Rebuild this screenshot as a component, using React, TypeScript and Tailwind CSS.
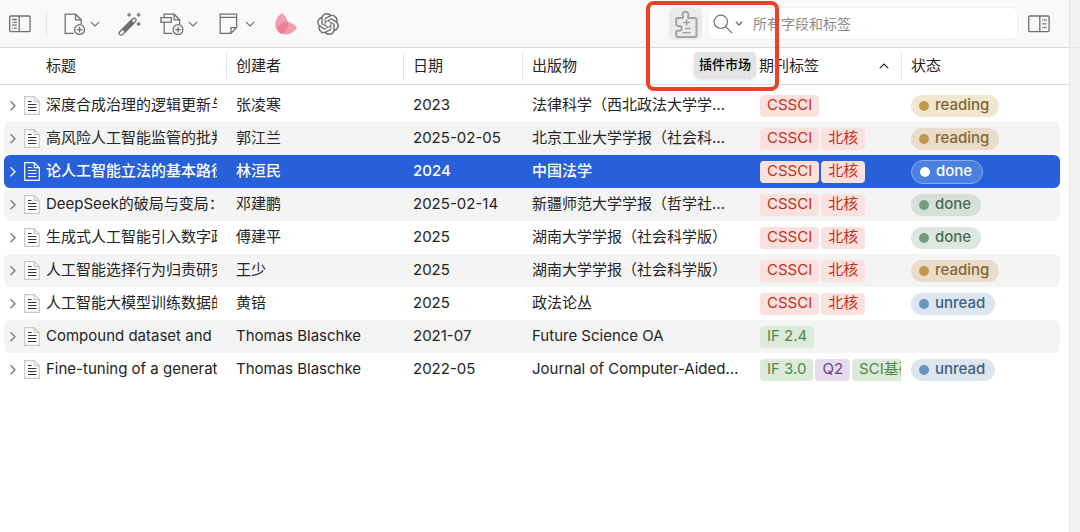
import { useState } from "react";
import clsx from "clsx";
import { SiOpenai } from "react-icons/si";

type Tag = { label: string; color: "red" | "green" | "purple" };
type Status = "reading" | "done" | "unread";

type Item = {
  id: number;
  title: string;
  creator: string;
  date: string;
  publication: string;
  tags: Tag[];
  status?: Status;
};

const cssci: Tag = { label: "CSSCI", color: "red" };
const beihe: Tag = { label: "北核", color: "red" };

const items: Item[] = [
  { id: 1, title: "深度合成治理的逻辑更新与体系迭代", creator: "张凌寒", date: "2023", publication: "法律科学（西北政法大学学报）", tags: [cssci], status: "reading" },
  { id: 2, title: "高风险人工智能监管的批判与反思", creator: "郭江兰", date: "2025-02-05", publication: "北京工业大学学报（社会科学版）", tags: [cssci, beihe], status: "reading" },
  { id: 3, title: "论人工智能立法的基本路径", creator: "林洹民", date: "2024", publication: "中国法学", tags: [cssci, beihe], status: "done" },
  { id: 4, title: "DeepSeek的破局与变局：", creator: "邓建鹏", date: "2025-02-14", publication: "新疆师范大学学报（哲学社会科学版）", tags: [cssci, beihe], status: "done" },
  { id: 5, title: "生成式人工智能引入数字政府", creator: "傅建平", date: "2025", publication: "湖南大学学报（社会科学版）", tags: [cssci, beihe], status: "done" },
  { id: 6, title: "人工智能选择行为归责研究", creator: "王少", date: "2025", publication: "湖南大学学报（社会科学版）", tags: [cssci, beihe], status: "reading" },
  { id: 7, title: "人工智能大模型训练数据的", creator: "黄锫", date: "2025", publication: "政法论丛", tags: [cssci, beihe], status: "unread" },
  { id: 8, title: "Compound dataset and", creator: "Thomas Blaschke", date: "2021-07", publication: "Future Science OA", tags: [{ label: "IF 2.4", color: "green" }] },
  {
    id: 9,
    title: "Fine-tuning of a generative",
    creator: "Thomas Blaschke",
    date: "2022-05",
    publication: "Journal of Computer-Aided Molecular Design",
    tags: [
      { label: "IF 3.0", color: "green" },
      { label: "Q2", color: "purple" },
      { label: "SCI基础版", color: "green" },
    ],
    status: "unread",
  },
];

const tagColors = {
  red: "bg-[#fbe1de] text-[#c0311c]",
  green: "bg-[#dcebd9] text-[#4f8748]",
  purple: "bg-[#e6dced] text-[#6b4390]",
};

const statusColors = {
  reading: { pill: "bg-[#f1e7d0] text-[#846632]", striped: "bg-[#e9dcc9] text-[#846632]", dot: "bg-[#c2984a]" },
  done: { pill: "bg-[#dde7df] text-[#4c6a57]", striped: "bg-[#d6e0d8] text-[#4c6a57]", dot: "bg-[#759a80]" },
  unread: { pill: "bg-[#dce6ee] text-[#40607f]", striped: "bg-[#d5dfe8] text-[#40607f]", dot: "bg-[#6c94bd]" },
};

const Chevron = () => (
  <svg viewBox="0 0 10 6" className="h-[6px] w-[10px]" fill="none" stroke="currentColor" strokeWidth="1.2">
    <path d="M.8.8 5 5 9.2.8" />
  </svg>
);

const LeftPaneIcon = () => (
  <svg viewBox="0 0 22 18" className="h-[18px] w-[22px]" fill="none" stroke="currentColor" strokeWidth="1.3">
    <rect x=".7" y="1" width="20.4" height="15.6" rx="1" />
    <path d="M10.2 1v15.6M3.2 4.5h4.6M3.2 7.4h.9M5 7.4h2.8M3.2 10.2h4.6M3.2 13.1h.9M5 13.1h2.8" />
  </svg>
);

const RightPaneIcon = () => (
  <svg viewBox="0 0 22 18" className="h-[18px] w-[22px]" fill="none" stroke="currentColor" strokeWidth="1.3">
    <rect x=".7" y="1" width="20.4" height="15.6" rx="1" />
    <path d="M11.8 1v15.6M14.2 5h.9M16 5h2.4M14.2 8.8h4.2M14.2 12.5h.9M16 12.5h2.4" />
  </svg>
);

const NewItemIcon = () => (
  <svg viewBox="0 0 22 22" className="size-[22px]" fill="none" stroke="currentColor" strokeWidth="1.3">
    <path d="M10 20.4H1.2V1.2h10.4l5.6 5.6v4.4M11.6 1.2v5.6h5.6" />
    <circle cx="15.6" cy="16.6" r="4.9" />
    <path d="M15.6 13.8v5.6M12.8 16.6h5.6" />
  </svg>
);

const WandIcon = () => (
  <svg viewBox="0 0 24 24" className="size-6" fill="none" stroke="currentColor" strokeWidth="1.3">
    <path d="M1.6 20 14.8 6.7a1.9 1.9 0 0 1 2.8 0 1.9 1.9 0 0 1 0 2.7L4.4 22.6a1.9 1.9 0 0 1-2.7 0 1.9 1.9 0 0 1-.1-2.6z" />
    <path d="M4.5 17.1 13 8.6l2.8 2.7-8.5 8.5z" fill="currentColor" />
    <path d="M11.2.8v4M9.2 2.8h4M20.6.8v4M18.6 2.8h4M20.6 10v4M18.6 12h4" />
  </svg>
);

const ImportIcon = () => (
  <svg viewBox="0 0 24 22" className="h-[22px] w-6" fill="none" stroke="currentColor" strokeWidth="1.3">
    <path d="M4.2 4.6V1.2h10l5.4 5.6v4.4M14.2 1.2v5.6h5.4M4.2 9.2v11.2h7.9" />
    <rect x=".9" y="4.6" width="10.4" height="4.6" />
    <circle cx="18" cy="16.6" r="4.9" />
    <path d="M18 13.8v5.6M15.2 16.6h5.6" />
  </svg>
);

const NoteIcon = () => (
  <svg viewBox="0 0 20 22" className="h-[22px] w-5" fill="none" stroke="currentColor" strokeWidth="1.3">
    <path d="M1.2 1.2h16.4v13.2L12 20.4H1.2zM1.2 4.4h16.4M17.6 14.6H12v5.8" />
  </svg>
);

const PetalsIcon = () => (
  <svg viewBox="0 0 22 22" className="size-[22px]" fill="#ec6f88" fillOpacity=".65">
    <path d="M7 0C2.8 3 .2 7 .2 11.5c0 4.2 2.6 8 6.2 9.500 4-1.500 6.800-5.300 6.800-9.500C13.2 7 10.9 3 7 0z" />
    <path d="M21.8 14.8C19 10.6 14.5 8.600 10 9.200 5.700 9.900 2.300 13.100 2.400 17.200c2.200 3.600 6.900 5 11 4 3.600-.9 6.300-3.300 8.400-6.400z" />
  </svg>
);

const PuzzleIcon = () => (
  <svg viewBox="0 0 24 28" className="h-7 w-6" fill="none" stroke="currentColor" strokeWidth="2" strokeLinejoin="round">
    <path d="M4 8h4.200c.8 0 .9-.5.7-1.200C8 5 8.500 1.800 11.500 1.800s3.500 3.200 2.600 5c-.3.700 0 1.200.7 1.200H21c1 0 1.500.6 1.500 1.500v16c0 1-.6 1.500-1.500 1.500H4c-1.200 0-1.800-.6-1.800-1.800v-2.700c0-1.200.6-1.800 1.800-1.800h1.500c1.600 0 2.300-1 2.300-2.400s-.7-2.400-2.300-2.400H4c-1.200 0-1.800-.6-1.800-1.800V9.800C2.200 8.600 2.800 8 4 8z" />
    <path d="M12.600 9.200v6.600M9.300 12.500h6.600M11 18.600h5.700M8.500 22.800h8.200" strokeWidth="1.5" />
  </svg>
);

const DocumentIcon = ({ selected }: { selected: boolean }) => (
  <svg viewBox="0 0 16 20" className="h-5 w-4 shrink-0" fill="none">
    <path
      d="M.7.7h9.600l5 5v12.600H.7zM10.300.7v5h5"
      fill={selected ? "none" : "#fff"}
      stroke={selected ? "#fff" : "#c8c8c8"}
      strokeWidth="1.2"
    />
    <path
      d="M4 5.500h3.500M4 8.500h8.500M4 11.500h8.500M4 14.500h8.500"
      stroke={selected ? "#fff" : "#333"}
      strokeWidth="1.2"
    />
  </svg>
);

const StatusPill = ({ status, striped, selected }: { status: Status; striped: boolean; selected: boolean }) => {
  const colors = statusColors[status];
  return (
    <span
      className={clsx(
        "inline-flex items-center gap-1.5 rounded-full pl-2 pr-2.5 font-medium",
        selected ? "h-6 border border-[#8aaced] bg-[#4a80e0] text-white" : "h-[22px]",
        !selected && (striped ? colors.striped : colors.pill)
      )}
    >
      <span className={clsx("size-2.5 rounded-full", selected ? "bg-white" : colors.dot)} />
      {status}
    </span>
  );
};

const columns = ["标题", "创建者", "日期", "出版物", "期刊标签", "状态"];

const App = () => {
  const [selectedId, setSelectedId] = useState<number>(3);
  const [query, setQuery] = useState("");

  return (
    <div className="flex min-h-screen bg-white font-[Inter,'Noto_Sans_CJK_SC',sans-serif] text-[15px] text-[#242424]">
      <main className="min-w-0 flex-1">
        {/* Toolbar */}
        <header className="flex h-12 items-center border-b border-[#d9d9d9] bg-[#f9f9f9] pl-[9px] pr-[19px] text-[#707070]">
          <button aria-label="切换左侧栏">
            <LeftPaneIcon />
          </button>
          <div className="ml-[15px] mr-[17px] h-6 w-px bg-[#e3e3e3]" />
          <button aria-label="新建条目" className="flex items-center gap-1">
            <NewItemIcon />
            <Chevron />
          </button>
          <button aria-label="通过标识符添加" className="ml-[18px]">
            <WandIcon />
          </button>
          <button aria-label="添加附件" className="ml-[18px] flex items-center gap-1">
            <ImportIcon />
            <Chevron />
          </button>
          <button aria-label="新建笔记" className="ml-[21px] flex items-center gap-1.5">
            <NoteIcon />
            <Chevron />
          </button>
          <button aria-label="花瓣" className="ml-5">
            <PetalsIcon />
          </button>
          <button aria-label="GPT" className="ml-5">
            <SiOpenai className="size-[22px]" />
          </button>

          <div className="relative ml-auto">
            <button
              aria-label="插件市场"
              className="flex size-[33px] items-center justify-center rounded-md bg-[#ebebeb] text-[#a3a3a3]"
            >
              <PuzzleIcon />
            </button>
            <div
              role="tooltip"
              className="absolute left-[25px] top-[45px] z-10 flex h-[25px] items-center whitespace-nowrap rounded-sm bg-[#e2e3e5] px-[5px] text-[13px] font-medium text-black shadow-md"
            >
              插件市场
            </div>
            {/* Highlight frame */}
            <div className="pointer-events-none absolute -left-[23px] -top-1.5 z-20 h-[90px] w-[133px] rounded-lg border-4 border-[#ee4027]" />
          </div>

          <div className="ml-[5px] flex h-[33px] w-[311px] items-center rounded-md border border-[#efefef] bg-white pl-[5px]">
            <button aria-label="搜索范围" className="flex items-center gap-0.5">
              <svg viewBox="0 0 20 20" className="size-5" fill="none" stroke="currentColor" strokeWidth="1.2">
                <circle cx="7.8" cy="7.8" r="6.7" />
                <path d="m12.6 12.6 6.6 6.6" />
              </svg>
              <svg viewBox="0 0 8 5" className="h-[5px] w-2" fill="none" stroke="currentColor" strokeWidth="1.3">
                <path d="M.8.8 4 4 7.2.8" />
              </svg>
            </button>
            <input
              type="text"
              aria-label="搜索"
              placeholder="所有字段和标签"
              value={query}
              onChange={(e) => setQuery(e.target.value)}
              className="ml-2.5 min-w-0 flex-1 bg-transparent text-sm outline-none placeholder:text-[#8c8c8c]"
            />
          </div>
          <button aria-label="切换右侧栏" className="ml-2.5">
            <RightPaneIcon />
          </button>
        </header>

        {/* Item list */}
        <table className="w-full table-fixed border-separate border-spacing-0">
          <colgroup>
            <col className="w-[226px]" />
            <col className="w-[177px]" />
            <col className="w-[119px]" />
            <col className="w-[227px]" />
            <col className="w-[152px]" />
            <col />
          </colgroup>
          <thead>
            <tr>
              {columns.map((column, i) => (
                <th
                  key={column}
                  aria-sort={column === "期刊标签" ? "ascending" : undefined}
                  className="h-[37px] border-b border-[#dcdcdc] p-0 text-left font-normal"
                >
                  <button
                    className={clsx(
                      "flex h-[26px] w-full items-center justify-between pr-3",
                      i === 0 ? "pl-[46px]" : "border-l border-[#e0e0e0] pl-[9px]"
                    )}
                  >
                    {column}
                    {column === "期刊标签" && (
                      <span className="rotate-180">
                        <Chevron />
                      </span>
                    )}
                  </button>
                </th>
              ))}
            </tr>
          </thead>
          <tbody className="before:block before:h-1 before:content-['']">
            {items.map((item, i) => {
              const selected = item.id === selectedId;
              const striped = i % 2 === 1;
              const cell = clsx(
                "flex h-[33px] items-center overflow-hidden whitespace-nowrap",
                selected ? "bg-[#2860d9] font-medium text-white" : striped && "bg-[#f4f4f4]"
              );
              return (
                <tr key={item.id} aria-selected={selected} onClick={() => setSelectedId(item.id)}>
                  <td className="p-0 pl-1">
                    <div className={clsx(cell, "rounded-l-md pl-[5px] pr-[9px]")}>
                      <button
                        aria-label="展开"
                        className={clsx("mr-[5px] flex h-4 w-[10px] shrink-0 items-center", selected ? "text-white" : "text-[#777]")}
                      >
                        <svg viewBox="0 0 8 12" className="h-3 w-2" fill="none" stroke="currentColor" strokeWidth="1.3">
                          <path d="m1.5 1.2 4.5 4.500-4.500 4.500" />
                        </svg>
                      </button>
                      <DocumentIcon selected={selected} />
                      <span className="ml-1.5 min-w-0 flex-1 overflow-hidden">{item.title}</span>
                    </div>
                  </td>
                  <td className="p-0">
                    <div className={clsx(cell, "pl-2.5")}>{item.creator}</div>
                  </td>
                  <td className="p-0">
                    <div className={clsx(cell, "pl-2.5")}>{item.date}</div>
                  </td>
                  <td className="p-0">
                    <div className={clsx(cell, "px-2.5")}>
                      <span className="truncate">{item.publication}</span>
                    </div>
                  </td>
                  <td className="p-0">
                    <div className={clsx(cell, "gap-0.5 pl-[11px] font-normal")}>
                      {item.tags.map((tag) => (
                        <span
                          key={tag.label}
                          className={clsx("flex h-[22px] shrink-0 items-center rounded-sm px-[7px]", tagColors[tag.color])}
                        >
                          {tag.label}
                        </span>
                      ))}
                    </div>
                  </td>
                  <td className="p-0 pr-[9px]">
                    <div className={clsx(cell, "rounded-r-md pl-2.5")}>
                      {item.status && <StatusPill status={item.status} striped={striped} selected={selected} />}
                    </div>
                  </td>
                </tr>
              );
            })}
          </tbody>
        </table>
      </main>

      {/* Collapsed side pane */}
      <aside className="w-[11px] shrink-0 border-l border-[#e6e6e6] bg-[#f1f1f1]">
        <div className="h-12 border-b border-[#e6e6e6]" />
      </aside>
    </div>
  );
};

export default App;
